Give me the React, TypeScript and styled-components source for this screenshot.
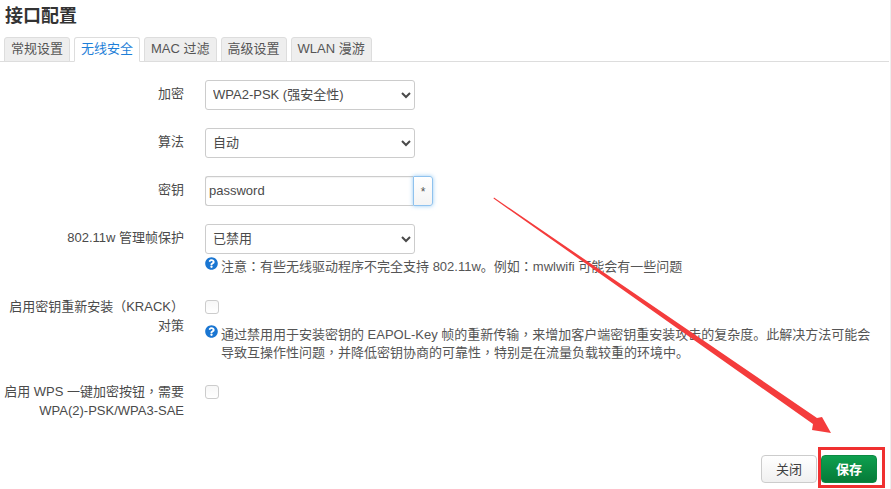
import React from 'react'
import { FaQuestionCircle } from 'react-icons/fa'
import styled, { createGlobalStyle } from 'styled-components'

const Global = createGlobalStyle`
  * {
    margin: 0;
    padding: 0;
    box-sizing: border-box;
  }

  html, body {
    width: 891px;
    height: 489px;
    overflow: hidden;
    background: #fff;
  }

  body {
    font-family: "Liberation Sans", "Noto Sans CJK SC", sans-serif;
    font-size: 13px;
    color: #404040;
  }
`

const Page = styled.div`
  position: relative;
  width: 891px;
  height: 489px;
  padding: 4px 1px 0 0;
  border-right: 1px solid #eee;
  display: flex;
  flex-direction: column;
`

const Title = styled.h3`
  font-size: 18px;
  line-height: 25px;
  font-weight: 700;
  color: #333;
  padding-left: 5px;
`

const TabBar = styled.ul`
  display: flex;
  gap: 4px;
  list-style: none;
  margin-top: 8px;
  padding-left: 4px;
  height: 25px;
  border-bottom: 1px solid #ddd;
`

const Tab = styled.li<{ $active?: boolean }>`
  height: 25px;
  padding: 0 6px;
  line-height: 21px;
  border: 1px solid #ddd;
  border-bottom: ${p => (p.$active ? '1px solid #fff' : '1px solid #ddd')};
  border-radius: 3px 3px 0 0;
  background: ${p => (p.$active ? '#fff' : '#eee')};
  color: ${p => (p.$active ? '#1f7fd8' : '#555')};
`

const Form = styled.div`
  display: flex;
  flex-direction: column;
  gap: 18px;
  padding-top: 18px;
`

const Row = styled.div<{ $extra?: number }>`
  display: grid;
  grid-template-columns: 184px 1fr;
  column-gap: 21px;
  margin-top: ${p => p.$extra || 0}px;
`

const Label = styled.label<{ $tall?: boolean }>`
  text-align: right;
  line-height: ${p => (p.$tall ? '19px' : '30px')};
  margin-top: ${p => (p.$tall ? '-2px' : '-1px')};
  color: #4a4a4a;
`

const Punct = styled.span`
  font-family: "Noto Sans CJK TC", sans-serif;
`

const Bracket = styled.span`
  font-family: "Noto Sans CJK KR", sans-serif;
`

const Field = styled.div`
  display: flex;
  flex-direction: column;
  min-width: 0;
`

const Select = styled.select`
  width: 210px;
  height: 30px;
  padding: 0 3px 2px;
  border: 1px solid #ccc;
  border-radius: 3px;
  background: #fff;
  color: #4a4a4a;
  font: inherit;
`

const InputGroup = styled.div`
  display: flex;
  height: 30px;
`

const TextInput = styled.input`
  width: 208px;
  height: 30px;
  padding: 0 3px 2px;
  border: 1px solid #ccc;
  border-right: 0;
  border-radius: 3px 0 0 3px;
  color: #4a4a4a;
  font: inherit;
  outline: none;
  box-shadow: inset 0 1px 1px rgba(0, 0, 0, 0.05);
`

const RevealButton = styled.button`
  width: 20px;
  height: 30px;
  border: 1px solid #8fc2ee;
  border-radius: 0 3px 3px 0;
  background: linear-gradient(#fff, #f4f4f4);
  box-shadow: 0 0 4px rgba(82, 168, 236, 0.6);
  color: #555;
  font: inherit;
  font-size: 12px;
  line-height: 30px;
`

const Check = styled.span`
  display: block;
  width: 14px;
  height: 14px;
  margin-top: 2px;
  border: 1px solid #ccc;
  border-radius: 3px;
  background: linear-gradient(#f7f7f7, #fff);
`

const Help = styled.div<{ $gap: number }>`
  display: flex;
  gap: 2px;
  margin-top: ${p => p.$gap}px;
  width: 670px;
  line-height: 17px;
  color: #555;

  svg {
    flex: none;
    width: 13px;
    height: 13px;
    margin-top: 1px;
    color: #1a76d2;
  }
`

const HelpText = styled.p`
  padding-left: 1px;
  margin-top: 1px;
`

const Footer = styled.div`
  display: flex;
  justify-content: flex-end;
  gap: 4px;
  margin-top: auto;
  padding: 0 12px 6px 0;
`

const Button = styled.button<{ $primary?: boolean }>`
  width: 56px;
  height: 28px;
  padding-bottom: 2px;
  border: 1px solid ${p => (p.$primary ? '#0b8a43' : '#ccc')};
  border-radius: 4px;
  background: ${p =>
    p.$primary
      ? 'linear-gradient(#0ea04f, #067a38)'
      : 'linear-gradient(#fff, #f0f0f0)'};
  color: ${p => (p.$primary ? '#fff' : '#404040')};
  font: inherit;
  font-weight: ${p => (p.$primary ? 700 : 400)};
`

const Callout = styled.svg`
  position: absolute;
  left: 0;
  top: 0;
  pointer-events: none;
`

const tabs = ['常规设置', '无线安全', 'MAC 过滤', '高级设置', 'WLAN 漫游']

export default function App() {
  return (
    <Page>
      <Global />
      <Title>接口配置</Title>
      <TabBar>
        {tabs.map(t => (
          <Tab key={t} $active={t === '无线安全'}>
            {t}
          </Tab>
        ))}
      </TabBar>
      <Form>
        <Row>
          <Label>加密</Label>
          <Field>
            <Select defaultValue='psk2'>
              <option value='psk2'>WPA2-PSK (强安全性)</option>
            </Select>
          </Field>
        </Row>
        <Row>
          <Label>算法</Label>
          <Field>
            <Select defaultValue='auto'>
              <option value='auto'>自动</option>
            </Select>
          </Field>
        </Row>
        <Row>
          <Label>密钥</Label>
          <Field>
            <InputGroup>
              <TextInput defaultValue='password' />
              <RevealButton>*</RevealButton>
            </InputGroup>
          </Field>
        </Row>
        <Row>
          <Label>802.11w 管理帧保护</Label>
          <Field>
            <Select defaultValue='off'>
              <option value='off'>已禁用</option>
            </Select>
            <Help $gap={2}>
              <FaQuestionCircle />
              <HelpText>
                注意<Punct>：</Punct>有些无线驱动程序不完全支持 802.11w。例如<Punct>：</Punct>mwlwifi 可能会有一些问题
              </HelpText>
            </Help>
          </Field>
        </Row>
        <Row $extra={5}>
          <Label $tall>
            启用密钥重新安装<Bracket>（</Bracket>KRACK<Bracket>）</Bracket>
            <br />
            对策
          </Label>
          <Field>
            <Check />
            <Help $gap={10}>
              <FaQuestionCircle />
              <HelpText>
                通过禁用用于安装密钥的 EAPOL-Key 帧的重新传输<Punct>，</Punct>来增加客户端密钥重安装攻击的复杂度。此解决方法可能会
                <br />
                导致互操作性问题<Punct>，</Punct>并降低密钥协商的可靠性<Punct>，</Punct>特别是在流量负载较重的环境中。
              </HelpText>
            </Help>
          </Field>
        </Row>
        <Row $extra={4}>
          <Label $tall>
            启用 WPS 一键加密按钮<Punct>，</Punct>需要
            <br />
            WPA(2)-PSK/WPA3-SAE
          </Label>
          <Field>
            <Check />
          </Field>
        </Row>
      </Form>
      <Footer>
        <Button>关闭</Button>
        <Button $primary>保存</Button>
      </Footer>
      <Callout width='891' height='489' viewBox='0 0 891 489'>
        <polygon
          points='494,197.5 817,418 822,417 831,433 812,430 813,424 493.5,198.5'
          fill='#f43c3c'
        />
        <rect
          x='819.5'
          y='448.5'
          width='64'
          height='38'
          fill='none'
          stroke='#f03030'
          strokeWidth='3'
        />
      </Callout>
    </Page>
  )
}
